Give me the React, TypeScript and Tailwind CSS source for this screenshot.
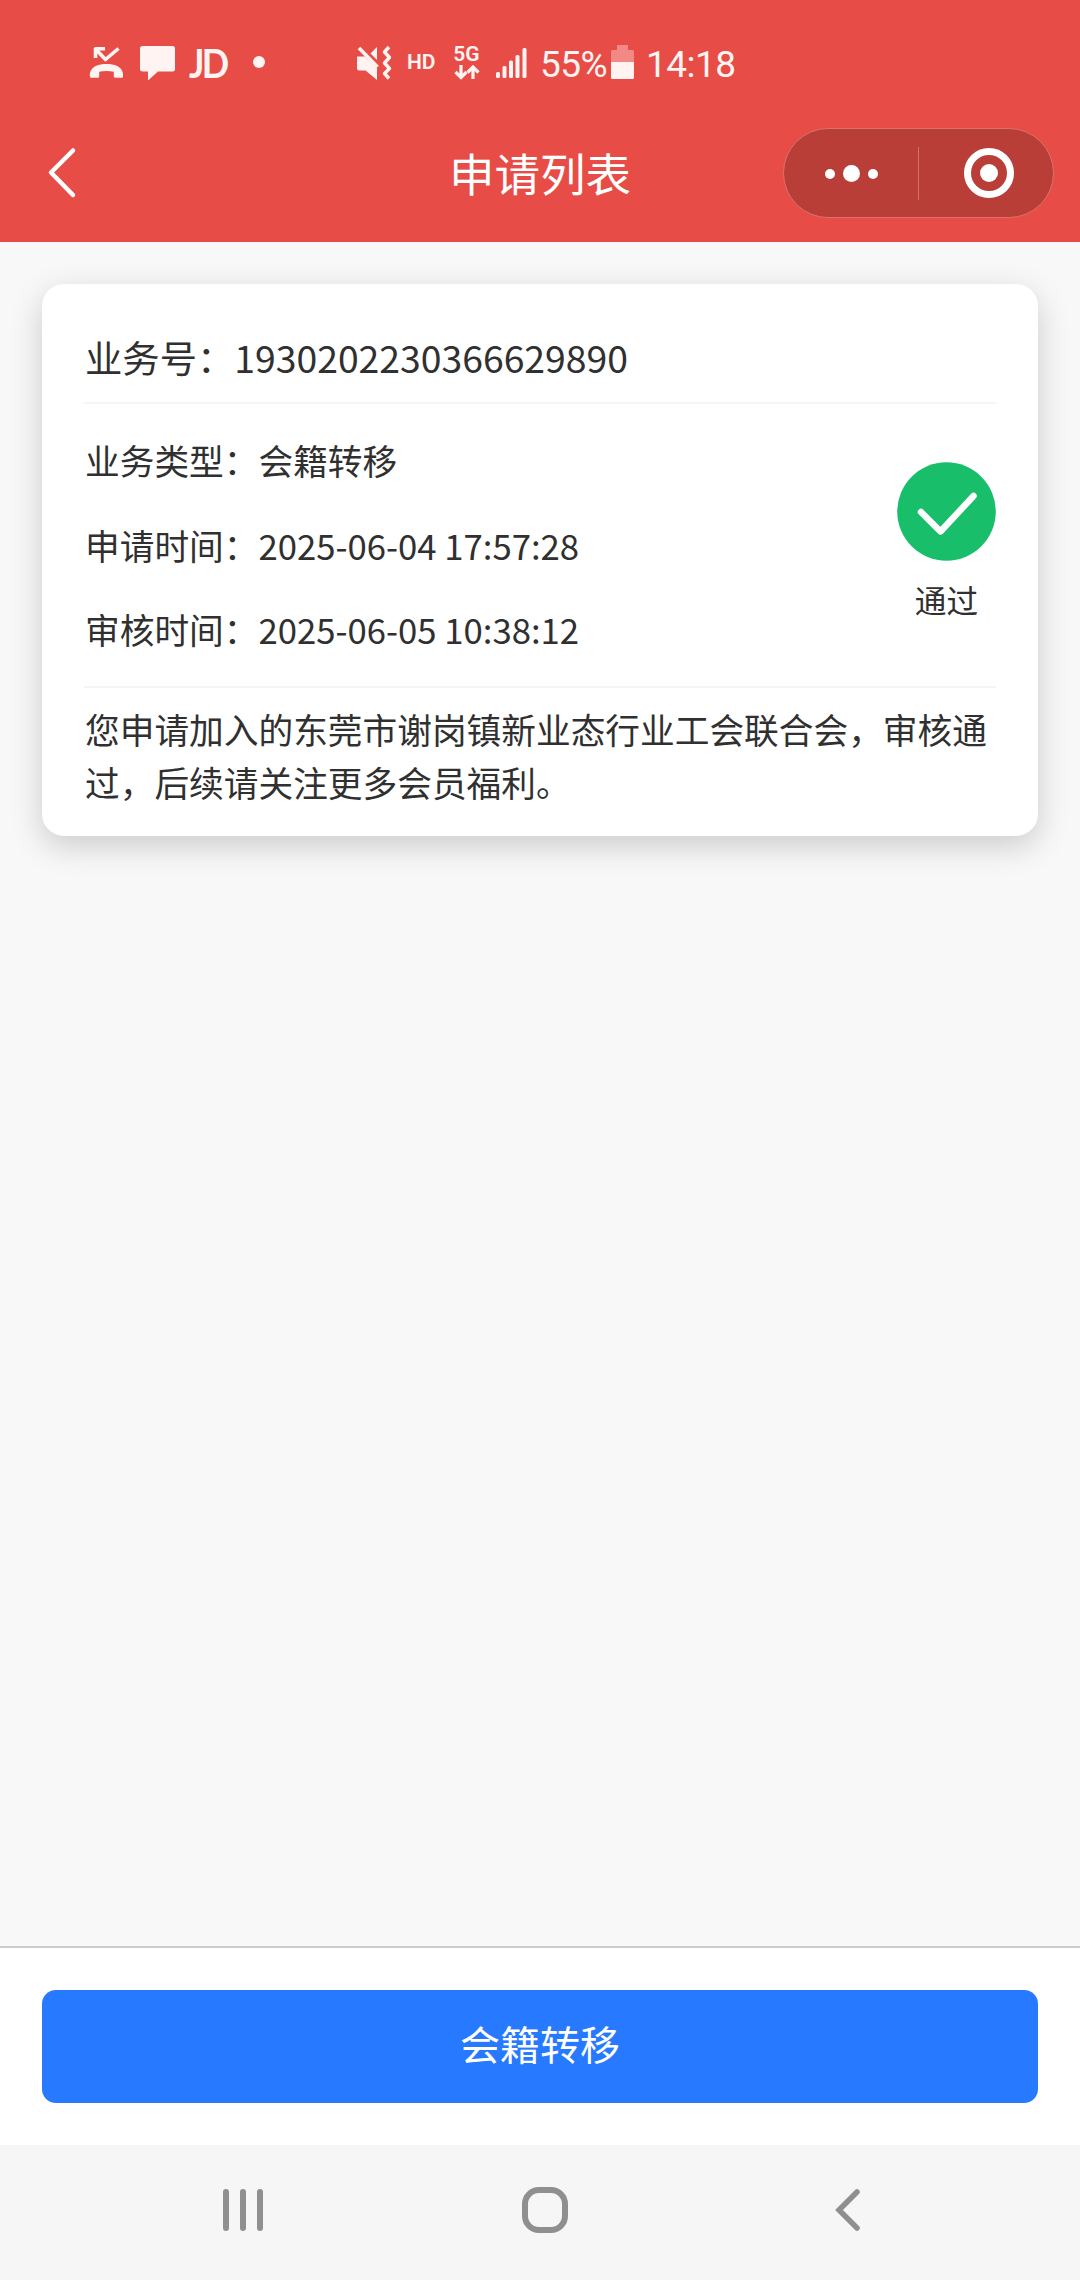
import React from "react";

function StatusBar() {
  return (
    <div className="flex h-[124px] items-center pl-[89px] font-['Roboto',sans-serif] text-[#fff4f2]">
      <svg className="h-[36px] w-[35px] shrink-0" viewBox="0 0 35 36" fill="none">
        <path d="M6.500 14V4.700H16M7 5.500l9.500 10L29.500 4.500" stroke="currentColor" strokeWidth="3.600" strokeLinejoin="round" />
        <path
          d="M1 32.500c-.8-6 3-12.500 16.500-12.500S34.800 26.500 34 32.500c-.1.900-.6 1.300-1.400 1.300H26c-.8 0-1.200-.4-1.200-1.200v-4.800c-4.500-1.200-10.100-1.200-14.600 0v4.800c0 .8-.4 1.200-1.200 1.200H2.400C1.600 33.800 1.100 33.400 1 32.500z"
          fill="currentColor"
        />
      </svg>
      <svg className="ml-4 h-[36px] w-[35px] shrink-0" viewBox="0 0 35 36" fill="currentColor">
        <path d="M2.500 2h30a2.500 2.500 0 0 1 2.500 2.500v20.500a2.500 2.500 0 0 1-2.500 2.500H18l-10 9v-9H2.500A2.500 2.500 0 0 1 0 25V4.500A2.500 2.500 0 0 1 2.500 2z" />
      </svg>
      <span className="ml-[14px] w-[41px] shrink-0 origin-left scale-x-[0.88] font-['Lato',sans-serif] text-[41px] leading-none font-bold tracking-[-3px]">JD</span>
      <span className="ml-[23px] size-[12px] shrink-0 rounded-full bg-[#fff4f2]" />
      <svg className="ml-[91px] h-[36px] w-[36px] shrink-0" viewBox="0 0 36 36" fill="none">
        <path d="M1 12.500h8L21 24.500V36L9.500 26.500H3a2 2 0 0 1-2-2z" fill="currentColor" />
        <path d="M14.500 9.500L21 3v13z" fill="currentColor" />
        <path d="M3 4l18.500 19" stroke="currentColor" strokeWidth="3.600" />
        <path d="M33 3l-4.500 5 5 5.500-5 5.500 5 5.500-5 5 4.500 5" stroke="currentColor" strokeWidth="3.400" strokeLinejoin="round" />
      </svg>
      <span className="ml-[15px] w-[30px] shrink-0 text-[21px] leading-none font-semibold">HD</span>
      <div className="ml-[16px] flex w-[27px] shrink-0 flex-col items-center">
        <span className="text-[21px] leading-[18px] font-semibold">5G</span>
        <svg className="mt-[2px] h-[15px] w-[26px]" viewBox="0 0 26 15" fill="none" stroke="currentColor" strokeWidth="3.200">
          <path d="M7 0v12.500M1.500 7L7 12.500 12.500 7M19 14V2M13.500 7.500L19 2l5.500 5.500" />
        </svg>
      </div>
      <svg className="ml-[15px] h-[32px] w-[32px] shrink-0" viewBox="0 0 32 32" fill="currentColor">
        <rect x="1" y="26" width="4" height="6" rx="1.500" />
        <rect x="7.500" y="20" width="4" height="12" rx="1.500" />
        <rect x="14" y="14.500" width="4" height="17.500" rx="1.500" />
        <rect x="20.500" y="9" width="4" height="23" rx="1.500" />
        <rect x="27.500" y="2" width="4" height="30" rx="1.500" />
      </svg>
      <span className="ml-[13px] mt-1 w-[66px] shrink-0 text-[37px] leading-none tracking-[-0.5px]">55%</span>
      <svg className="ml-[5px] h-[34px] w-[23px] shrink-0" viewBox="0 0 23 34">
        <path d="M6 0h11v5h4.500A1.500 1.500 0 0 1 23 6.500V17H0V6.500A1.500 1.500 0 0 1 1.500 5H6z" fill="#f38985" />
        <path d="M0 17h23v15.500a1.500 1.500 0 0 1-1.500 1.500h-20A1.500 1.500 0 0 1 0 32.500z" fill="currentColor" />
      </svg>
      <span className="ml-[12px] mt-1 shrink-0 text-[37px] leading-none tracking-[-0.500px]">14:18</span>
    </div>
  );
}

function TitleBar() {
  return (
    <div className="grid h-[118px] grid-cols-[1fr_auto_1fr] items-start">
      <svg className="mt-[22px] ml-[46px] h-[54px] w-[32px]" viewBox="0 0 32 54" fill="none">
        <path d="M27 4.500L5 26.500l22 22.500" stroke="#fff" strokeWidth="4.500" strokeLinecap="round" strokeLinejoin="round" />
      </svg>
      <h1 className="mt-[18px] text-[45.500px] leading-[60px] font-normal text-white">申请列表</h1>
      <div className="mt-[4px] mr-[26px] flex h-[90px] w-[271px] items-center justify-self-end rounded-full border border-[#dc716b] bg-[#b83e37]">
        <div className="flex w-[134px] items-center justify-center gap-[8px] pt-px">
          <span className="size-[10px] rounded-full bg-white" />
          <span className="size-[17px] rounded-full bg-white" />
          <span className="size-[10px] rounded-full bg-white" />
        </div>
        <span className="h-[53px] w-px bg-[#d4716b]" />
        <div className="flex flex-1 items-center justify-center pl-[5px]">
          <span className="flex size-[50px] items-center justify-center rounded-full border-[7px] border-white">
            <span className="size-[18px] rounded-full bg-white" />
          </span>
        </div>
      </div>
    </div>
  );
}

const details = [
  { label: "业务类型：", value: "会籍转移" },
  { label: "申请时间：", value: "2025-06-04 17:57:28" },
  { label: "审核时间：", value: "2025-06-05 10:38:12" },
];

function ApplicationCard() {
  return (
    <article className="mx-[42px] mt-[42px] h-[552px] rounded-[22px] bg-white px-[42px] text-[#303030] shadow-[0_10px_32px_rgba(0,0,0,0.18)]">
      <div className="flex h-[120px] items-end border-b-2 border-[#f5f5f5] pb-[18px] pl-px text-[37.350px] leading-[54px]">
        <span>业务号：1930202230366629890</span>
      </div>
      <div className="flex h-[284px] items-center justify-between border-b-2 border-[#f5f5f5]">
        <dl className="flex flex-col pl-px text-[34.700px] leading-[84.500px]">
          {details.map((d) => (
            <div key={d.label} className="flex">
              <dt>{d.label}</dt>
              <dd>{d.value}</dd>
            </div>
          ))}
        </dl>
        <div className="flex flex-col items-center pb-[7px]">
          <svg className="size-[99px]" viewBox="0 0 99 99" fill="none">
            <circle cx="49.500" cy="49.500" r="49.300" fill="#19be6b" />
            <path d="M24 50l19.500 19.500L76.500 34" stroke="#fff" strokeWidth="6.500" strokeLinecap="round" strokeLinejoin="round" />
          </svg>
          <span className="mt-[15px] text-[31.700px] leading-[46px]">通过</span>
        </div>
      </div>
      <p className="pt-[15px] pl-px text-[34.700px] leading-[53px]">
        您申请加入的东莞市谢岗镇新业态行业工会联合会，审核通过，后续请关注更多会员福利。
      </p>
    </article>
  );
}

function NavigationBar() {
  return (
    <nav className="flex h-[135px] items-start bg-[#f6f6f6] pt-[43px] pl-[222px] text-[#8f8f8f]">
      <svg className="h-[44px] w-[42px]" viewBox="0 0 42 44" stroke="currentColor" strokeWidth="6" strokeLinecap="round">
        <path d="M4 4v36M21 4v36M38 4v36" />
      </svg>
      <span className="-mt-px ml-[258px] size-[46px] rounded-[17px] border-[6px] border-[#8f8f8f]" />
      <svg className="ml-[265px] h-[44px] w-[28px]" viewBox="0 0 28 44" fill="none" stroke="currentColor" strokeWidth="5.500" strokeLinecap="round">
        <path d="M24 4L6 22l18 18" />
      </svg>
    </nav>
  );
}

export default function App() {
  return (
    <div className="flex h-[2280px] w-[1080px] flex-col overflow-hidden bg-[#f8f8f8] font-['Noto_Sans_CJK_SC',sans-serif]">
      <header className="h-[242px] shrink-0 bg-[#e74d46]">
        <StatusBar />
        <TitleBar />
      </header>
      <main className="flex-1">
        <ApplicationCard />
      </main>
      <footer className="h-[199px] shrink-0 border-t-2 border-[#cccccc] bg-white px-[42px] pt-[42px]">
        <button className="flex h-[113px] w-full items-center justify-center rounded-[14px] bg-[#2779ff] pb-[8px] text-[40px] text-white">会籍转移</button>
      </footer>
      <NavigationBar />
    </div>
  );
}
